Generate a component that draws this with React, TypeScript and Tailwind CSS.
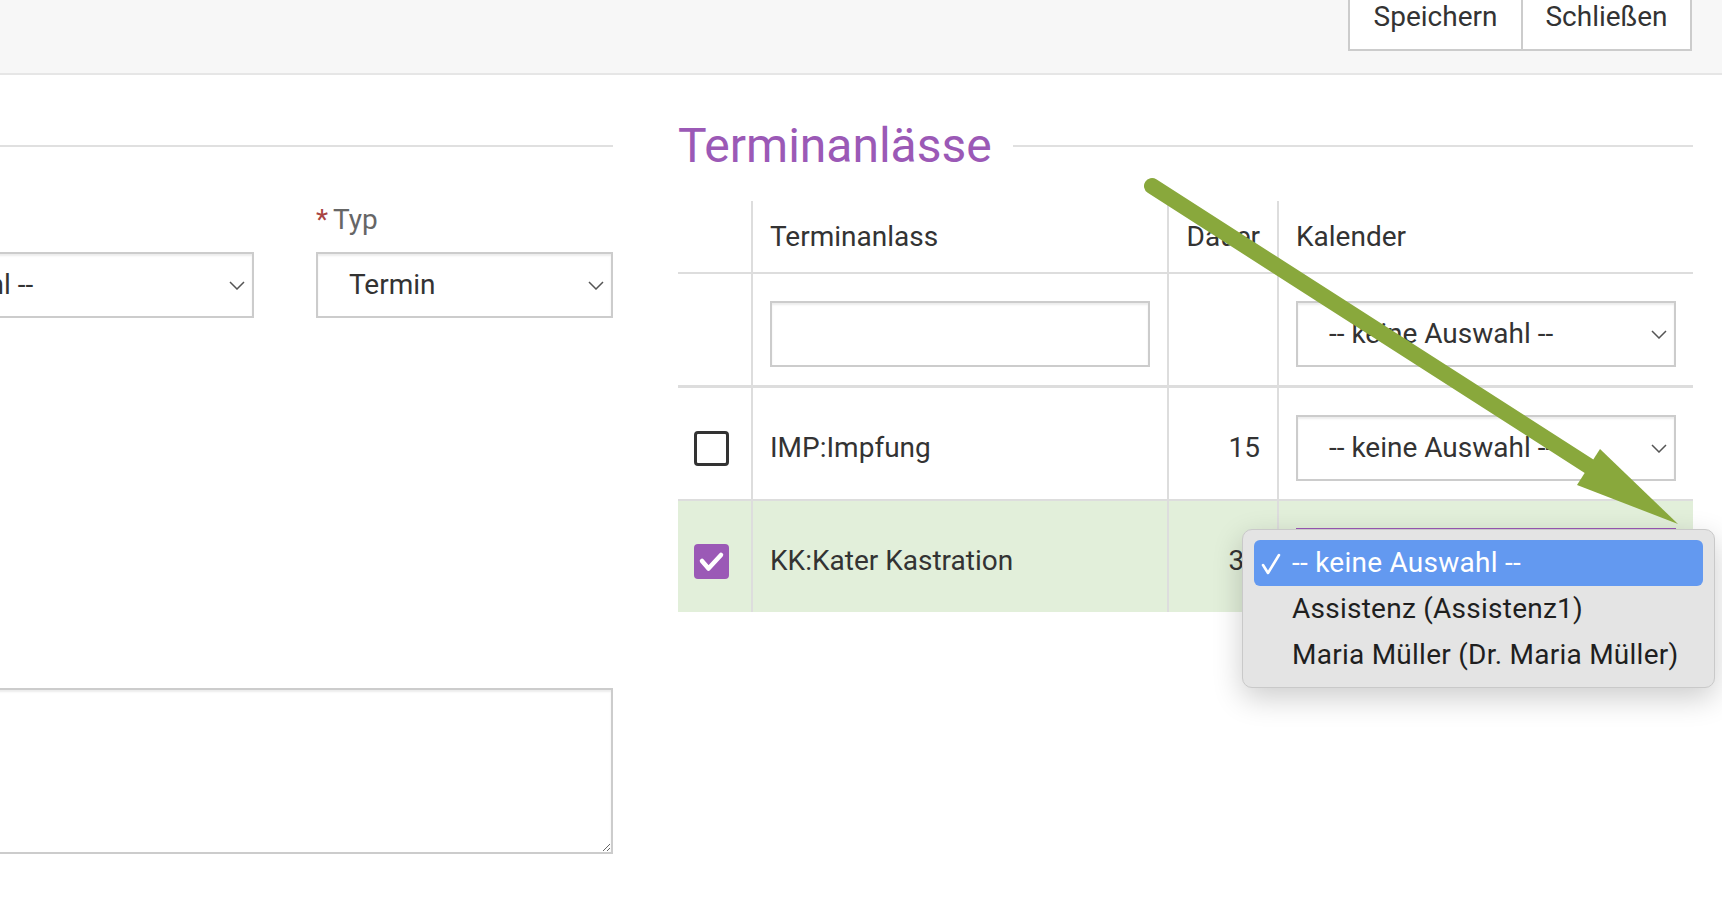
import React from "react";

// Dünner Pfeil nach unten wie beim nativen Select
const Chevron = () => (
  <svg width="16" height="9" viewBox="0 0 16 9" fill="none" className="shrink-0">
    <path d="M1 1l7 7 7-7" stroke="#555" strokeWidth="1.5" />
  </svg>
);

function SelectBox({
  value,
  className = "",
  focused = false,
}: {
  value: string;
  className?: string;
  focused?: boolean;
}) {
  return (
    <div
      className={`flex h-[66px] items-center justify-between overflow-hidden border-2 bg-white pl-[31px] pr-[7px] shadow-[inset_0_2px_2px_rgba(0,0,0,0.075)] ${
        focused ? "border-[#9b59b6]" : "border-[#cccccc]"
      } ${className}`}
    >
      <span className="whitespace-nowrap">{value}</span>
      <Chevron />
    </div>
  );
}

function Checkbox({ checked }: { checked: boolean }) {
  if (checked) {
    return (
      <div className="flex h-[35px] w-[35px] items-center justify-center rounded-[4px] bg-[#9b59b6]">
        <svg width="35" height="35" viewBox="0 0 35 35" fill="none">
          <path d="M8 17l6.5 7.5L27 11" stroke="#fff" strokeWidth="4.5" strokeLinecap="round" strokeLinejoin="round" />
        </svg>
      </div>
    );
  }
  return <div className="h-[35px] w-[35px] rounded-[4px] border-[3px] border-[#333]" />;
}

const calendarOptions = ["-- keine Auswahl --", "Assistenz (Assistenz1)", "Maria Müller (Dr. Maria Müller)"];

// geöffnetes Dropdown (macOS-Stil)
function OptionMenu() {
  return (
    <div className="absolute left-[-54px] top-[1px] z-10 w-[473px] rounded-[10px] border border-[#c9c9c9] bg-[#e4e4e4] px-[11px] pt-[10px] pb-[9px] tracking-[0.25px] shadow-[0_10px_30px_rgba(0,0,0,0.2)]">
      {calendarOptions.map((opt, i) =>
        i === 0 ? (
          <div key={opt} className="relative flex h-[46px] items-center rounded-[6px] bg-[#6399f0] pl-[38px] text-white">
            <svg className="absolute left-[7px] top-[13px]" width="20" height="22" viewBox="0 0 20 22" fill="none">
              <path d="M2 12l5 8L18 2" stroke="#fff" strokeWidth="2.6" strokeLinecap="round" strokeLinejoin="round" />
            </svg>
            {opt}
          </div>
        ) : (
          <div key={opt} className="flex h-[46px] items-center pl-[38px] text-[#1f1f1f]">
            {opt}
          </div>
        )
      )}
    </div>
  );
}

const rows = [
  { name: "IMP:Impfung", dauer: "15", checked: false },
  { name: "KK:Kater Kastration", dauer: "30", checked: true },
];

export default function App() {
  return (
    <div className="relative h-[908px] w-[1722px] overflow-hidden bg-white font-['Roboto',sans-serif] text-[28px] text-[#333]">
      <header className="flex h-[75px] justify-end border-b-2 border-[#e6e6e6] bg-[#f7f7f7] pr-[30px]">
        <div className="-mt-[17px] flex h-[68px] border-2 border-[#cccccc] bg-white">
          <button type="button" className="flex h-full w-[171px] items-center justify-center leading-[40px]">
            Speichern
          </button>
          <button type="button" className="flex h-full w-[169px] items-center justify-center border-l-2 border-[#cccccc] leading-[40px]">
            Schließen
          </button>
        </div>
      </header>

      <div className="flex pt-[43px]">
        {/* linke Spalte, links abgeschnitten */}
        <div className="-ml-[224px] w-[837px] shrink-0">
          <div className="flex h-[56px] items-center">
            <div className="h-[2px] w-full bg-[#e0e0e0]" />
          </div>
          <div className="mt-[30px] flex gap-[62px]">
            <div className="w-[478px]">
              <div className="h-[32px]" />
              <SelectBox value="-- keine Auswahl --" className="mt-[16px]" />
            </div>
            <div className="w-[297px]">
              <label className="flex h-[32px] items-center leading-[32px] text-[#666]">
                <span className="mr-[5px] text-[#a94442]">*</span>Typ
              </label>
              <SelectBox value="Termin" className="mt-[16px]" />
            </div>
          </div>
          <textarea
            readOnly
            className="mt-[370px] block h-[166px] w-full border-2 border-[#cccccc] shadow-[inset_0_2px_2px_rgba(0,0,0,0.075)] outline-none"
          />
        </div>

        {/* rechte Spalte: Terminanlässe */}
        <div className="ml-[65px] w-[1015px] shrink-0">
          <div className="flex h-[56px] items-center">
            <h2 className="text-[48px] leading-[56px] text-[#9b59b6]">Terminanlässe</h2>
            <div className="ml-[21px] h-[2px] flex-1 bg-[#e0e0e0]" />
          </div>

          <div className="mt-[27px]">
            <div className="grid h-[73px] grid-cols-[73px_416px_110px_416px] border-b-2 border-[#dddddd]">
              <div />
              <div className="flex items-center border-l-2 border-[#dddddd] pl-[17px]">Terminanlass</div>
              <div className="flex items-center justify-end border-l-2 border-[#dddddd] pr-[17px]">Dauer</div>
              <div className="flex items-center border-l-2 border-[#dddddd] pl-[17px]">Kalender</div>
            </div>

            <div className="grid grid-cols-[73px_416px_110px_416px] border-b-[3px] border-[#dddddd]">
              <div />
              <div className="border-l-2 border-[#dddddd] px-[17px] pt-[27px] pb-[18px]">
                <div className="h-[66px] border-2 border-[#cccccc] bg-white shadow-[inset_0_2px_2px_rgba(0,0,0,0.075)]" />
              </div>
              <div className="border-l-2 border-[#dddddd]" />
              <div className="border-l-2 border-[#dddddd] px-[17px] pt-[27px] pb-[18px]">
                <SelectBox value="-- keine Auswahl --" />
              </div>
            </div>

            {rows.map((r, i) => (
              <div
                key={r.name}
                className={`grid grid-cols-[73px_416px_110px_416px] ${
                  r.checked ? "bg-[#e2efda]" : "bg-white"
                } ${i === 0 ? "border-b-2 border-[#dddddd]" : ""}`}
              >
                <div className="flex items-start pt-[27px] pb-[18px] pl-[16px]">
                  <div className="flex h-[66px] items-center">
                    <Checkbox checked={r.checked} />
                  </div>
                </div>
                <div className="flex items-start border-l-2 border-[#dddddd] pl-[17px] pt-[27px] pb-[18px]">
                  <div className="flex h-[66px] items-center">{r.name}</div>
                </div>
                <div className="flex items-start justify-end border-l-2 border-[#dddddd] pr-[17px] pt-[27px] pb-[18px]">
                  <div className="flex h-[66px] items-center">{r.dauer}</div>
                </div>
                <div className="border-l-2 border-[#dddddd] px-[17px] pt-[27px] pb-[18px]">
                  <div className="relative">
                    <SelectBox value={r.checked ? "" : "-- keine Auswahl --"} focused={r.checked} />
                    {r.checked && <OptionMenu />}
                  </div>
                </div>
              </div>
            ))}
          </div>
        </div>
      </div>

      {/* grüner Hinweispfeil */}
      <svg
        className="pointer-events-none absolute left-0 top-0 z-20"
        width="1722"
        height="908"
        viewBox="0 0 1722 908"
      >
        <line x1="1152" y1="186" x2="1598" y2="472" stroke="#89a83c" strokeWidth="16" strokeLinecap="round" />
        <polygon points="1600,449 1678,524 1577,485" fill="#89a83c" />
      </svg>
    </div>
  );
}
